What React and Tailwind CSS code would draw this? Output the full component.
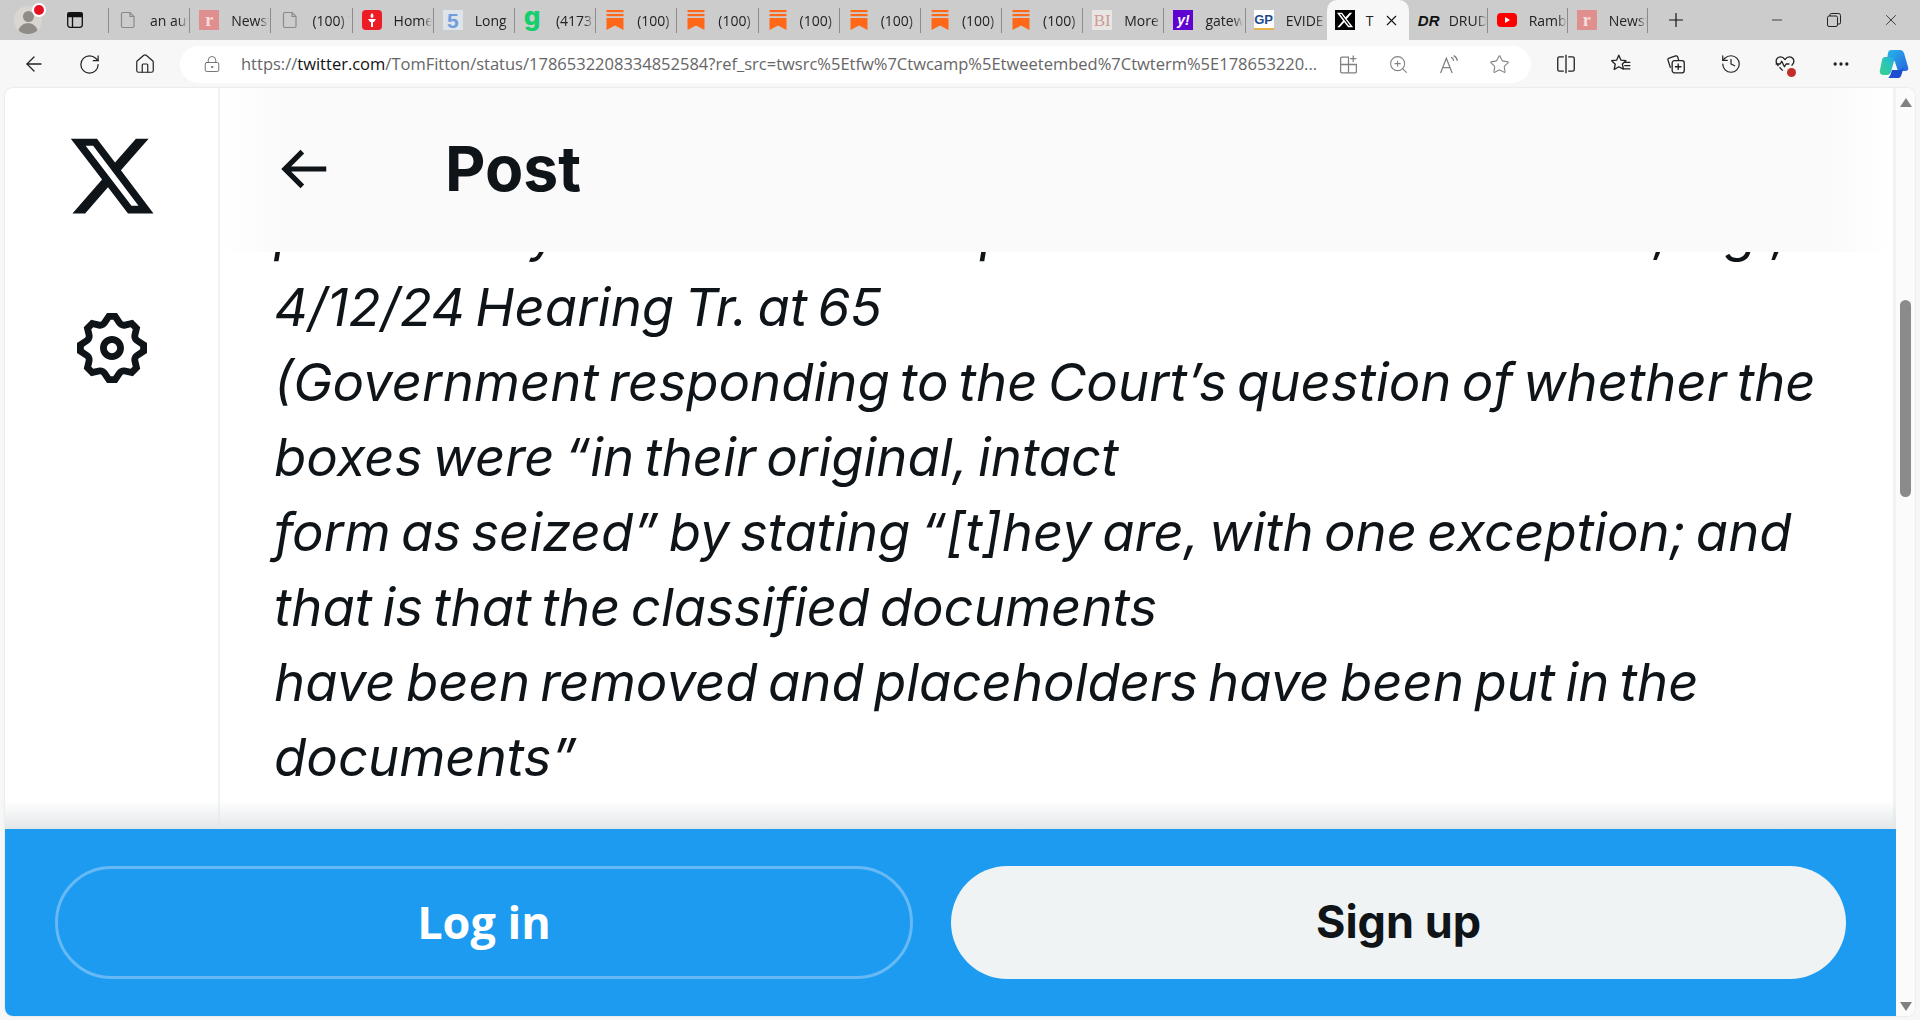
import React from "react";
import { ArrowLeft, RotateCw, House, ZoomIn, Star, Plus, Minus, X, Ellipsis, History, LockKeyhole } from "lucide-react";

const Doc = () => (
  <svg viewBox="0 0 20 20" className="size-5 text-[#8a8a8a]" fill="none" stroke="currentColor" strokeWidth="1.2">
    <path d="M5 2.500h7l4 4v9.500a1.500 1.500 0 0 1-1.500 1.500h-9.500a1.500 1.500 0 0 1-1.500-1.500v-12a1.500 1.500 0 0 1 1.500-1.500z" />
    <path d="M12 2.500v4h4" />
  </svg>
);
const R = () => (
  <div className="size-5 bg-[#e08f8f] text-[#f6dede] flex items-center justify-center font-['Liberation_Serif',serif] font-bold text-[18px] leading-none">r</div>
);
const Torch = () => (
  <svg viewBox="0 0 20 20" className="size-5">
    <rect width="20" height="20" rx="4" fill="#ee1c25" />
    <path d="M10 3c1.600 1.800 2 3 .9 4.700H9.100C8 6 8.400 4.800 10 3z" fill="#fff" />
    <path d="M6 9h8l-2 3h-1v5H9v-5H8z" fill="#fff" />
  </svg>
);
const Five = () => (
  <div className="size-5 bg-[#dfe3ea] text-[#6f9ee0] flex items-center justify-center font-['Liberation_Sans',sans-serif] font-bold text-[21px] leading-none">5</div>
);
const G = () => (
  <div className="size-5 text-[#14cf6c] flex items-center justify-center font-['Inter',sans-serif] font-extrabold text-[26px] leading-none -mt-2 -ml-1">g</div>
);
const Sub = () => (
  <svg viewBox="0 0 20 20" className="size-5" fill="#ff6719">
    <rect x="1.500" y="0" width="17" height="2.200" />
    <rect x="1.500" y="4" width="17" height="2.200" />
    <path d="M1.500 8h17v12l-8.500-4.500-8.500 4.500z" />
  </svg>
);
const BI = () => (
  <div className="size-5 bg-[#e8e6e4] text-[#d09a94] flex items-center justify-center font-['Liberation_Serif',serif] text-[17px] leading-none">BI</div>
);
const Yahoo = () => (
  <div className="size-5 bg-[#5f01d1] text-white flex items-center justify-center font-['Liberation_Sans',sans-serif] font-bold text-[14px] leading-none italic">y!</div>
);
const GP = () => (
  <div className="size-5 bg-white text-[#1d4a8f] flex items-center justify-center font-['Liberation_Sans',sans-serif] font-bold text-[13px] leading-none border-b-2 border-[#e8b04a]">GP</div>
);
const XIcon = ({ className, fill = "#0f1419" }) => (
  <svg viewBox="0 0 24 24" className={className} fill={fill}>
    <path d="M18.244 2.250h3.308l-7.227 8.260 8.502 11.240H16.170l-5.214-6.817L4.990 21.750H1.680l7.730-8.835L1.254 2.250H8.080l4.713 6.231zm-1.161 17.520h1.833L7.084 4.126H5.117z" />
  </svg>
);
const XFav = () => (
  <div className="size-5 bg-black flex items-center justify-center">
    <XIcon className="size-[18px]" fill="#fff" />
  </div>
);
const DR = () => (
  <div className="w-5 h-5 text-[#111] flex items-center justify-center font-['Liberation_Sans',sans-serif] font-bold italic text-[15px] leading-none">DR</div>
);
const YT = () => (
  <svg viewBox="0 0 20 20" className="size-5">
    <rect x="0" y="3" width="20" height="14" rx="4" fill="#f00" />
    <path d="M8 7l5 3-5 3z" fill="#fff" />
  </svg>
);

const Tab = ({ icon, text }) => (
  <div className="w-[81.2px] h-[25px] shrink-0 flex items-center pl-[9px] border-r border-[#8c8c8c]">
    <div className="w-5 shrink-0 flex justify-center">{icon}</div>
    <div className="ml-3 w-[38px] overflow-hidden whitespace-nowrap text-[14px] text-[#222] [mask-image:linear-gradient(to_right,black_75%,transparent)]">{text}</div>
  </div>
);

const Sidebar = () => (
  <svg viewBox="0 0 16 16" className="size-4" fill="none" stroke="#111" strokeWidth="1.300">
    <rect x="0.700" y="0.700" width="14.600" height="14.600" rx="2.500" />
    <path d="M1 1.200h14v3.300H1z" fill="#111" />
    <path d="M5.500 4.500v10.800" />
  </svg>
);

const SplitIcon = () => (
  <svg viewBox="0 0 20 20" className="size-[22px]" fill="none" stroke="#222" strokeWidth="1.200">
    <path d="M8 3.500H4a1.500 1.500 0 0 0-1.500 1.500v10A1.500 1.500 0 0 0 4 16.500h4M12 3.500h4a1.500 1.500 0 0 1 1.500 1.500v10a1.500 1.500 0 0 1-1.500 1.500h-4M10 1.500v17" />
  </svg>
);
const FavIcon = () => (
  <svg viewBox="0 0 20 20" className="size-[22px]" fill="none" stroke="#222" strokeWidth="1.200" strokeLinejoin="round">
    <path d="M8 2l2 4.500 4.500.5-3.300 3 1 4.700L8 12.500l-4.200 2.500 1-4.800L1.500 7l4.500-.5zM13.500 8.500h5M13 11.500h5.500M12 14.500h6.500" />
  </svg>
);
const Collect = () => (
  <svg viewBox="0 0 20 20" className="size-[22px]" fill="none" stroke="#222" strokeWidth="1.200">
    <path d="M5 13.500 2.700 6.500A1.500 1.500 0 0 1 3.700 4.600l6-1.900a1.500 1.500 0 0 1 1.900 1l.8 2.800" />
    <rect x="6.500" y="7" width="11" height="11" rx="2" />
    <path d="M12 9.500v6M9 12.500h6" />
  </svg>
);
const Heart = () => (
  <div className="relative size-[22px]">
    <svg viewBox="0 0 20 20" className="size-[22px]" fill="none" stroke="#222" strokeWidth="1.200" strokeLinejoin="round">
      <path d="M4 12 2.500 9.500C1 6.500 3 3.500 6 3.500c1.800 0 3 1 4 2.500 1-1.500 2.200-2.500 4-2.500 3 0 5 3 3.500 6L16 11.500M1.500 10h4l1.500-2.500 2.500 5 1.500-2.500h3" />
      <path d="M5 13l3 3" />
    </svg>
    <div className="absolute right-0 -bottom-[2px] size-[9px] rounded-full bg-[#c42b2b]" />
  </div>
);
const Apps = () => (
  <svg viewBox="0 0 20 20" className="size-[21px]" fill="none" stroke="#808080" strokeWidth="1.200">
    <path d="M10.500 3H3.500a1 1 0 0 0-1 1v13a1 1 0 0 0 1 1h13a1 1 0 0 0 1-1V10h-15M10 3v15M14.500 1.500v6M11.500 4.500h6" />
  </svg>
);
const ReadAloud = () => (
  <svg viewBox="0 0 20 20" className="size-[21px]" fill="none" stroke="#808080" strokeWidth="1.200">
    <path d="M1.500 18 7 4l5.500 14M3.500 13h7M11.500 3c1.500.7 2.300 2 2.500 3.500M14 1.500c2 1 3.200 2.800 3.500 5" />
  </svg>
);
const Copilot = () => (
  <svg viewBox="0 0 32 32" className="size-8">
    <defs>
      <linearGradient id="c1" x1="0" y1="0" x2="1" y2="1">
        <stop offset="0" stopColor="#25b8e8" />
        <stop offset="1" stopColor="#2a62e0" />
      </linearGradient>
      <linearGradient id="c2" x1="0" y1="1" x2="1" y2="0">
        <stop offset="0" stopColor="#38d18f" />
        <stop offset="0.600" stopColor="#2cc4b8" />
        <stop offset="1" stopColor="#1fa8e8" />
      </linearGradient>
    </defs>
    <path d="M13 2h9c2 0 3 1 4 3l4 14c1 3-1 4-3 4h-7l-3-9c-1-2-2-3-4-3h-4l1-6c.3-2 1.500-3 3-3z" fill="url(#c1)" />
    <path d="M7 9h7c2 0 3 2 2 4l-3 11c-1 2-2 3-4 3H6c-3 0-5-2-4-5L4 12c.3-2 1.500-3 3-3z" fill="url(#c2)" />
    <path d="M14 22l7 0c2 0 4-1 5-3l-3 9c-.5 1.500-1.500 2-3.500 2H10c1.500-.5 3-4 4-8z" fill="#1b4fd0" />
  </svg>
);
const Restore = () => (
  <svg viewBox="0 0 14 14" className="size-[14px]" fill="none" stroke="#222" strokeWidth="1">
    <rect x="0.500" y="3" width="10" height="10.500" rx="1.500" />
    <path d="M3 3V1.800A1.300 1.300 0 0 1 4.300.5h7A2 2 0 0 1 13.500 2.500v7A1.300 1.300 0 0 1 12 11h-1.500" />
  </svg>
);

const tabs = [
  [<Doc />, "an aut"], [<R />, "Newsf"], [<Doc />, "(100) T"], [<Torch />, "Home"], [<Five />, "Long"], [<G />, "(4173)"],
  [<Sub />, "(100)"], [<Sub />, "(100)"], [<Sub />, "(100)"], [<Sub />, "(100)"], [<Sub />, "(100)"], [<Sub />, "(100)"],
  [<BI />, "More"], [<Yahoo />, "gatew"],
];

const lines = [
  "particularly stated in the last prior statement to the Court, e.g.,",
  "4/12/24 Hearing Tr. at 65",
  "(Government responding to the Court’s question of whether the",
  "boxes were “in their original, intact",
  "form as seized” by stating “[t]hey are, with one exception; and",
  "that is that the classified documents",
  "have been removed and placeholders have been put in the",
  "documents”",
];

export default function App() {
  return (
    <div className="w-[1920px] h-[1020px] overflow-hidden bg-[#f7f7f7] font-['Open_Sans',sans-serif] flex flex-col">
      {/* tab strip */}
      <div className="h-10 bg-[#cccccc] flex items-center shrink-0">
        <div className="w-[109px] h-[25px] shrink-0 flex items-center border-r border-[#8c8c8c]">
          <div className="relative ml-[14px] size-7">
            <div className="size-7 rounded-full bg-[#d9d6d2] overflow-hidden">
              <div className="mx-auto mt-[5px] size-[11px] rounded-full bg-[#8f8b86]" />
              <div className="mx-auto mt-[1px] w-5 h-[12px] rounded-t-full bg-[#8f8b86]" />
            </div>
            <div className="absolute -top-[1px] -right-[2px] size-[10px] rounded-full bg-[#e81123] ring-2 ring-white" />
          </div>
          <div className="ml-[25px]"><Sidebar /></div>
        </div>
        {tabs.map(([icon, text], i) => <Tab key={i} icon={icon} text={text} />)}
        <div className="w-[81px] h-[25px] shrink-0 flex items-center pl-[8px]">
          <GP />
          <div className="ml-3 w-[40px] overflow-hidden whitespace-nowrap text-[14px] text-[#222] [mask-image:linear-gradient(to_right,black_75%,transparent)]">EVIDE</div>
        </div>
        <div className="relative w-[82px] h-10 shrink-0 bg-[#f7f7f7] rounded-t-[10px] flex items-center pl-2">
          <XFav />
          <span className="ml-[11px] text-[14px] text-[#222]">T</span>
          <X size={17} strokeWidth={1.500} className="ml-[10px] text-[#111]" />
        </div>
        <div className="w-[79px] h-[25px] shrink-0 flex items-center pl-[10px] border-r border-[#8c8c8c]">
          <DR />
          <div className="ml-[10px] w-[38px] overflow-hidden whitespace-nowrap text-[14px] text-[#222] [mask-image:linear-gradient(to_right,black_75%,transparent)]">DRUD</div>
        </div>
        <div className="w-[80px] h-[25px] shrink-0 flex items-center pl-[9px] border-r border-[#8c8c8c]">
          <YT />
          <div className="ml-3 w-[38px] overflow-hidden whitespace-nowrap text-[14px] text-[#222] [mask-image:linear-gradient(to_right,black_75%,transparent)]">Ramb</div>
        </div>
        <div className="w-[80px] h-[25px] shrink-0 flex items-center pl-[9px] border-r border-[#8c8c8c]">
          <R />
          <div className="ml-3 w-[38px] overflow-hidden whitespace-nowrap text-[14px] text-[#222] [mask-image:linear-gradient(to_right,black_75%,transparent)]">Newsf</div>
        </div>
        <Plus size={22} strokeWidth={1.300} className="ml-[17px] text-[#111]" />
        <div className="flex-1" />
        <Minus size={16} strokeWidth={1.200} className="text-[#222]" />
        <div className="ml-[42px]"><Restore /></div>
        <X size={18} strokeWidth={1.100} className="ml-[41px] mr-[20px] text-[#222]" />
      </div>

      {/* toolbar */}
      <div className="h-12 shrink-0 flex items-center bg-[#f7f7f7]">
        <ArrowLeft size={24} strokeWidth={1.300} className="ml-[22px] text-[#222]" />
        <RotateCw size={23} strokeWidth={1.300} className="ml-[32px] text-[#222]" />
        <House size={22} strokeWidth={1.300} className="ml-[33px] text-[#222]" />
        <div className="ml-[24px] w-[1351px] h-[37px] rounded-full bg-white flex items-center">
          <LockKeyhole size={18} strokeWidth={1.200} className="ml-[23px] text-[#666]" />
          <div className="ml-[20px] w-[1082px] whitespace-nowrap overflow-hidden text-[16.5px] text-[#666]">
            https://<span className="text-[#111]">twitter.com</span>/TomFitton/status/1786532208334852584?ref_src=twsrc%5Etfw%7Ctwcamp%5Etweetembed%7Ctwterm%5E178653220...
          </div>
          <div className="ml-[15px]"><Apps /></div>
          <ZoomIn size={21} strokeWidth={1.200} className="ml-[29px] text-[#808080]" />
          <div className="ml-[30px]"><ReadAloud /></div>
          <Star size={21} strokeWidth={1.200} className="ml-[29px] text-[#808080]" />
        </div>
        <div className="ml-[24px]"><SplitIcon /></div>
        <div className="ml-[33px]"><FavIcon /></div>
        <div className="ml-[33px]"><Collect /></div>
        <History size={22} strokeWidth={1.300} className="ml-[33px] text-[#222]" />
        <div className="ml-[32px]"><Heart /></div>
        <Ellipsis size={20} strokeWidth={2} className="ml-[35px] text-[#222]" />
        <div className="ml-[27px]"><Copilot /></div>
      </div>

      {/* page */}
      <div className="h-[928px] ml-[5px] mr-[5px] shrink-0 bg-white rounded-lg overflow-hidden flex shadow-[0_0_2px_rgba(0,0,0,0.15)]">
        <div className="flex-1 min-w-0 flex flex-col">
          <div className="relative flex-1 min-h-0 flex">
            <div className="w-[215px] shrink-0 border-r-2 border-[#eff3f4] flex flex-col items-center pt-[42px] gap-[85px]">
              <XIcon className="size-[92px]" />
              <svg viewBox="0 0 24 24" className="size-[82px]" fill="#0f1419">
                <path d="M10.540 1.750h2.920l1.570 2.360c.110.170.320.250.530.210l2.530-.590 2.170 2.170-.580 2.540c-.050.200.040.410.210.530l2.360 1.570v2.920l-2.360 1.570c-.170.120-.260.330-.210.530l.580 2.540-2.170 2.170-2.530-.590c-.210-.040-.420.040-.530.210l-1.570 2.360h-2.920l-1.580-2.360c-.110-.170-.320-.250-.520-.210l-2.540.590-2.170-2.170.580-2.540c.050-.200-.030-.410-.210-.530l-2.350-1.570v-2.920L4.100 8.970c.180-.120.260-.330.210-.530L3.730 5.900 5.900 3.730l2.540.590c.200.040.410-.040.520-.210l1.580-2.360zm1.070 2l-.980 1.470C10.050 6.080 9 6.500 7.990 6.270l-1.460-.340-.600.600.330 1.470c.240 1.010-.180 2.070-1.050 2.640l-1.460.980v.780l1.460.980c.870.570 1.290 1.630 1.050 2.640l-.330 1.470.600.600 1.460-.340c1.010-.230 2.060.190 2.640 1.050l.980 1.470h.780l.970-1.470c.580-.860 1.630-1.280 2.650-1.050l1.450.340.610-.600-.340-1.470c-.230-1.010.180-2.070 1.050-2.640l1.470-.980v-.780l-1.470-.980c-.870-.570-1.280-1.630-1.050-2.640l.340-1.470-.610-.600-1.450.340c-1.020.230-2.070-.190-2.650-1.050l-.970-1.470h-.780zM12 10.500c-.830 0-1.500.670-1.500 1.500s.670 1.500 1.500 1.500c.820 0 1.500-.670 1.500-1.500s-.680-1.500-1.500-1.500zM8.500 12c0-1.930 1.570-3.500 3.500-3.500 1.930 0 3.500 1.570 3.500 3.500s-1.570 3.500-3.500 3.500c-1.930 0-3.500-1.570-3.500-3.500z" />
              </svg>
            </div>
            <div className="relative flex-1 min-w-0 border-r-[3px] border-[#eff3f4] overflow-hidden">
              <div className="pt-[107px] pl-[54px] font-['Inter',sans-serif] italic text-[52.7px] leading-[75px] [word-spacing:-4.5px] text-[#0f1419] whitespace-nowrap">
                {lines.map((l) => <div key={l}>{l}</div>)}
              </div>
              <div className="absolute top-0 inset-x-0 h-[164px] bg-[linear-gradient(to_right,#ffffff,#fafafa_4%,#fafafa_96%,#ffffff)] flex items-center pl-[52px] pb-1">
                <svg viewBox="0 0 24 24" className="size-[62px] mt-[2px]" fill="#0f1419">
                  <path d="M7.414 13l5.043 5.040-1.414 1.420L3.586 12l7.457-7.460 1.414 1.420L7.414 11H21v2H7.414z" />
                </svg>
                <span className="ml-[111px] font-['Inter',sans-serif] font-bold text-[62.5px] text-[#0f1419] leading-none">Post</span>
              </div>
            </div>
            <div className="absolute bottom-0 inset-x-0 h-[28px] bg-gradient-to-b from-transparent to-[#e3e6e8]" />
          </div>
          <div className="h-[187px] shrink-0 bg-[#1d9bf0] flex items-center pl-[50px] pr-[50px] gap-[38px]">
            <div className="w-[858px] h-[113px] rounded-full border-[3px] border-[#66b9f5] flex items-center justify-center pb-[2px] text-white font-['Open_Sans',sans-serif] font-bold text-[45px]">Log in</div>
            <div className="flex-1 h-[113px] rounded-full bg-[#eff3f4] flex items-center justify-center pb-[2px] text-[#0f1419] font-['Inter',sans-serif] font-bold text-[45px]">Sign up</div>
          </div>
        </div>
        <div className="w-[19px] shrink-0 bg-[#fbfbfb] flex flex-col items-center justify-between pt-[10px] pb-[5px] relative">
          <div className="w-0 h-0 border-x-[6px] border-x-transparent border-b-[9px] border-b-[#808080]" />
          <div className="absolute top-[212px] left-[4px] w-[11px] h-[197px] rounded-full bg-[#8b8b8b]" />
          <div className="w-0 h-0 border-x-[6px] border-x-transparent border-t-[9px] border-t-[#808080]" />
        </div>
      </div>
    </div>
  );
}
